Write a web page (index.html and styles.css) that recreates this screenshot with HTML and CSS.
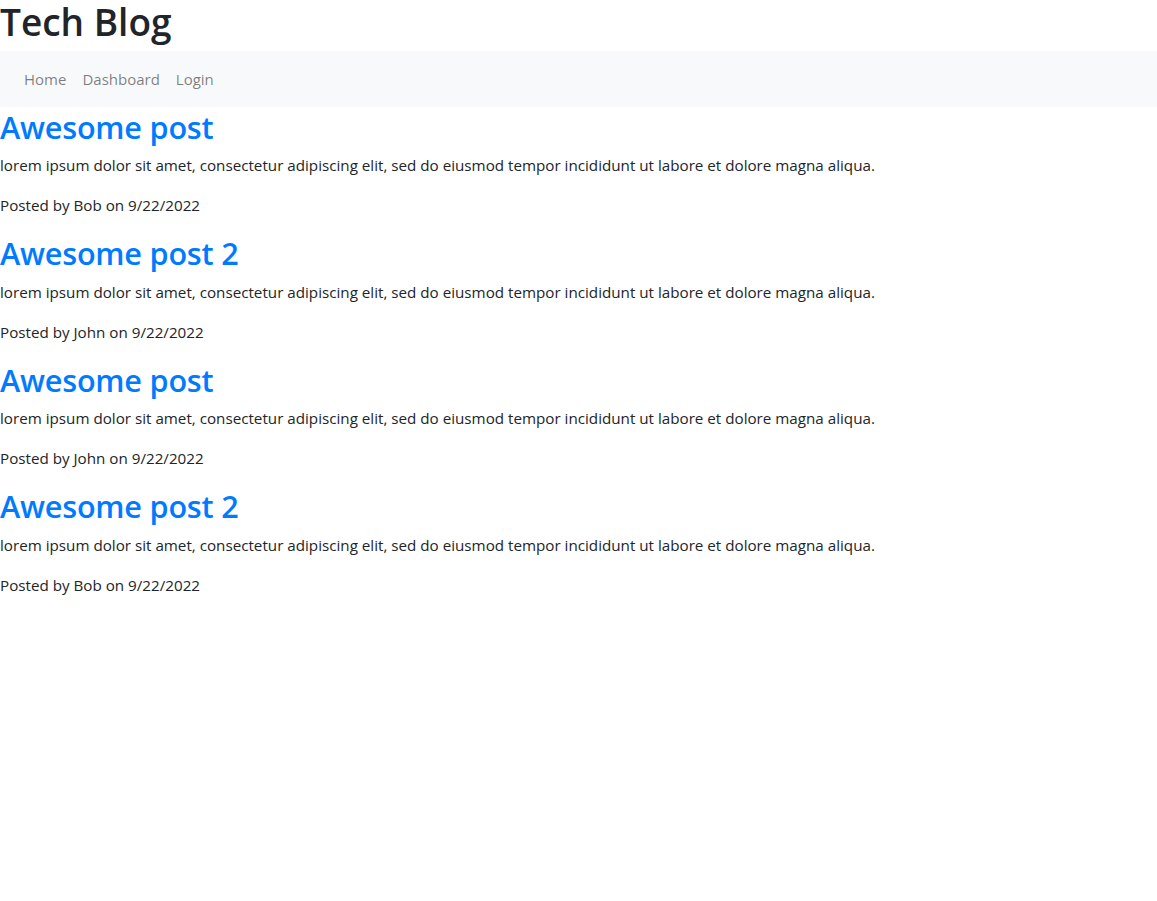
FILE: index.html
```html
<!DOCTYPE html>
<html lang="en">
<head>
<meta charset="utf-8">
<title>Tech Blog</title>
<link rel="stylesheet" href="styles.css">
</head>
<body>
<header>
  <h1 class="site-title">Tech Blog</h1>
  <nav class="navbar">
    <a class="nav-link" href="#">Home</a>
    <a class="nav-link" href="#">Dashboard</a>
    <a class="nav-link" href="#">Login</a>
  </nav>
</header>
<main>
  <article class="post">
    <h2 class="post-title"><a href="#">Awesome post</a></h2>
    <p>lorem ipsum dolor sit amet, consectetur adipiscing elit, sed do eiusmod tempor incididunt ut labore et dolore magna aliqua.</p>
    <p>Posted by Bob on 9/22/2022</p>
  </article>
  <article class="post">
    <h2 class="post-title"><a href="#">Awesome post 2</a></h2>
    <p>lorem ipsum dolor sit amet, consectetur adipiscing elit, sed do eiusmod tempor incididunt ut labore et dolore magna aliqua.</p>
    <p>Posted by John on 9/22/2022</p>
  </article>
  <article class="post">
    <h2 class="post-title"><a href="#">Awesome post</a></h2>
    <p>lorem ipsum dolor sit amet, consectetur adipiscing elit, sed do eiusmod tempor incididunt ut labore et dolore magna aliqua.</p>
    <p>Posted by John on 9/22/2022</p>
  </article>
  <article class="post">
    <h2 class="post-title"><a href="#">Awesome post 2</a></h2>
    <p>lorem ipsum dolor sit amet, consectetur adipiscing elit, sed do eiusmod tempor incididunt ut labore et dolore magna aliqua.</p>
    <p>Posted by Bob on 9/22/2022</p>
  </article>
</main>
</body>
</html>
```
FILE: styles.css
```css
* { box-sizing: border-box; }
body {
  margin: 0;
  font-family: "Open Sans", "Liberation Sans", sans-serif;
  font-size: 15.2px;
  line-height: 24px;
  color: #212529;
  background: #fff;
}
.site-title {
  margin: 0 0 3px 0;
  padding-bottom: 4px;
  font-size: 37px;
  font-weight: 600;
  line-height: 44px;
  letter-spacing: 0;
}
.navbar {
  display: flex;
  align-items: center;
  background: #f8f9fa;
  padding: 8px 16px;
}
.nav-link {
  display: block;
  padding: 8px;
  font-size: 15px;
  color: rgba(0,0,0,0.5);
  text-decoration: none;
}
.post-title {
  margin: 0 0 8px 0;
  padding-top: 2px;
  font-size: 30.6px;
  font-weight: 600;
  line-height: 36.4px;
  letter-spacing: -0.2px;
}
.post-title a {
  color: #007bff;
  text-decoration: none;
}
.post p {
  margin: 0 0 16px 0;
}
```
